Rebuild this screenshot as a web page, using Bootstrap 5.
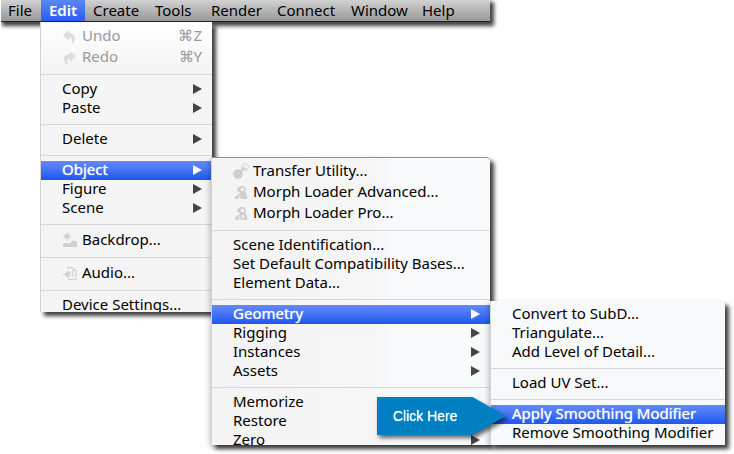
<!DOCTYPE html>
<html lang="en">
<head>
<meta charset="utf-8">
<meta name="viewport" content="width=device-width, initial-scale=1">
<title>Smoothing Modifier menu</title>
<link href="https://cdn.jsdelivr.net/npm/bootstrap@5.3.0/dist/css/bootstrap.min.css" rel="stylesheet">
<style>
body{background:#fff;color:#000;font-family:"Noto Sans","Open Sans",sans-serif;font-size:15px;line-height:19px}
.stage{min-height:454px}
.menubar{display:grid;grid-template-columns:41px 44px 62px 56px 66px 74px 71px 76px;width:fit-content;height:22px;
  background:linear-gradient(#d2d2d2,#b8b8b9 45%,#98989a);border-bottom:1px solid #222;box-shadow:3px 3px 4px 1px rgba(0,0,0,.75);clip-path:inset(0 -10px -10px 1px)}
.menubar button{border:0;background:none;padding:0 0 0 8px;text-align:left;line-height:21px;color:#000}
.menubar button.open{background:linear-gradient(#5c86f5,#2a5cf0);color:#fff;font-weight:600}
.menu{background:linear-gradient(#fff,#f5f5f5 44px);padding:4px 0 0;border-left:1px solid #d2d2d2;box-shadow:4px 4px 4px rgba(0,0,0,.75)}
.clip{overflow:hidden}
.menu-edit{left:40px;top:22px;width:172px;height:290px}
.menu-object{left:211px;top:157px;width:279px;height:288px;background:linear-gradient(90deg,#f4f4f4,#f6f6f7 58%,#f8f9fb 66%);border-top:1px solid #8a93a3;padding-top:3px;border-top-right-radius:4px;box-shadow:4px 4px 4px rgba(0,0,0,.75),-2px 2px 5px rgba(0,0,0,.2)}
.menu-geometry{left:490px;top:301px;width:235px;height:144px;background:#f8f9fb;border-top-right-radius:4px;box-shadow:4px 4px 4px rgba(0,0,0,.75),-2px 2px 5px rgba(0,0,0,.2)}
.entry{display:flex;align-items:center;width:100%;height:19px;border:0;background:none;padding:0 10px 2px 21px;color:#000;text-align:left;white-space:nowrap}
.entry.tall{height:21px}
.entry svg.glyph{width:20px;height:16px;flex:none;fill:#cfcfcf}
.entry:disabled{color:#999}
.entry:disabled svg.glyph{fill:#dedede}
.entry.lit{background:linear-gradient(#6489f7,#4373f4 50%,#1d56f2);color:#fff;text-shadow:0 0 1px rgba(255,255,255,.8)}
.entry.sub::after{content:"";margin-left:auto;border-left:9px solid #444;border-top:5px solid transparent;border-bottom:5px solid transparent}
.entry.lit.sub::after{border-left-color:#fff}
.rule{height:1px;margin:6px 0 5px;background:#d9d9d9}
.callout{left:377px;top:397px;filter:drop-shadow(2px 3px 2px rgba(0,0,0,.6))}
.callout span{display:block;width:129px;padding:0 0 0 16px;background:#0080c3;color:#fff;font:14px/38px "Liberation Sans",Arial,sans-serif;text-shadow:0 0 1px #fff;clip-path:polygon(0 0,74% 0,100% 50%,74% 100%,0 100%)}
</style>
<script src="https://cdn.jsdelivr.net/npm/bootstrap@5.3.0/dist/js/bootstrap.bundle.min.js"></script>
</head>
<body>
<main class="stage position-relative overflow-hidden">
<nav class="menubar" aria-label="Main menu">
<button type="button">File</button><button type="button" class="open">Edit</button><button type="button">Create</button><button type="button">Tools</button><button type="button">Render</button><button type="button">Connect</button><button type="button">Window</button><button type="button">Help</button>
</nav>

<div class="menu menu-edit position-absolute"><div class="clip h-100">
<button type="button" class="entry tall" disabled><svg class="glyph" viewBox="0 0 20 16"><path d="M1 7 7 2v3c5 0 7 3 5 9-1 1-2 1-3 1 2-3 1-5-2-5v3z"/></svg>Undo<span class="ms-auto">⌘Z</span></button>
<button type="button" class="entry tall" disabled><svg class="glyph" viewBox="0 0 20 16"><path d="M14 7 8 2v3C3 5 0 8 3 14c1 1 2 1 3 1-2-3-1-5 2-5v3z"/></svg>Redo<span class="ms-auto">⌘Y</span></button>
<div class="rule"></div>
<button type="button" class="entry sub">Copy</button>
<button type="button" class="entry sub">Paste</button>
<div class="rule"></div>
<button type="button" class="entry sub">Delete</button>
<div class="rule"></div>
<button type="button" class="entry sub lit">Object</button>
<button type="button" class="entry sub">Figure</button>
<button type="button" class="entry sub">Scene</button>
<div class="rule"></div>
<button type="button" class="entry tall"><svg class="glyph" viewBox="0 0 20 16"><circle cx="5" cy="4.500" r="2.500"/><path d="M5 0v9M.5 4.500h9M2 1.500l6 6M8 1.500l-6 6" stroke="#d4d4d4" stroke-width=".8"/><path d="M1 15v-3q3-2 6 0l4-4q2 2 4 1v6z"/></svg>Backdrop...</button>
<div class="rule"></div>
<button type="button" class="entry tall"><svg class="glyph" viewBox="0 0 20 16"><path d="M1 9h2l3-3v7l-3-3H1z"/><g fill="none" stroke="#cfcfcf"><path d="M6 4V2.500h5l3 3v9H6V14M11 2.500v3h3"/><path d="M8 7q1 2 0 4M10 6q2 3 0 6M6 6q2 3 0 7"/></g></svg>Audio...</button>
<div class="rule"></div>
<button type="button" class="entry">Device Settings...</button>
</div></div>

<div class="menu menu-object position-absolute"><div class="clip h-100">
<button type="button" class="entry tall"><svg class="glyph" viewBox="0 0 20 16"><circle cx="5" cy="11" r="4.800"/><path d="m7 9 4-4" stroke="#cfcfcf" stroke-width="2"/><circle cx="12" cy="4" r="3.500" fill="none" stroke="#d4d4d4"/><path d="m9.500 7 .5-4 3.500 3z"/></svg>Transfer Utility...</button>
<button type="button" class="entry tall"><svg class="glyph" viewBox="0 0 20 16"><path d="M4 6q1-4 5-4 4 0 4 4l-1 2q3 3 2 7H8l-1-2-2 2H2q0-3 2-4l2-1 1-2-3-1z"/><path d="M8 4h3v3H8zM5 12l3-1-2 2z" fill="#f5f5f5"/></svg>Morph Loader Advanced...</button>
<button type="button" class="entry tall"><svg class="glyph" viewBox="0 0 20 16"><path d="M4 6q1-4 5-4 4 0 4 4l-1 2q3 3 2 7H8l-1-2-2 2H2q0-3 2-4l2-1 1-2-3-1z"/><path d="M8 4h3v3H8zM5 12l3-1-2 2zM9 10h2v3H9z" fill="#f5f5f5"/></svg>Morph Loader Pro...</button>
<div class="rule"></div>
<button type="button" class="entry">Scene Identification...</button>
<button type="button" class="entry">Set Default Compatibility Bases...</button>
<button type="button" class="entry">Element Data...</button>
<div class="rule"></div>
<button type="button" class="entry sub lit">Geometry</button>
<button type="button" class="entry sub">Rigging</button>
<button type="button" class="entry sub">Instances</button>
<button type="button" class="entry sub">Assets</button>
<div class="rule"></div>
<button type="button" class="entry sub">Memorize</button>
<button type="button" class="entry sub">Restore</button>
<button type="button" class="entry sub">Zero</button>
</div></div>

<div class="menu menu-geometry position-absolute"><div class="clip h-100">
<button type="button" class="entry">Convert to SubD...</button>
<button type="button" class="entry">Triangulate...</button>
<button type="button" class="entry">Add Level of Detail...</button>
<div class="rule"></div>
<button type="button" class="entry">Load UV Set...</button>
<div class="rule"></div>
<button type="button" class="entry lit">Apply Smoothing Modifier</button>
<button type="button" class="entry">Remove Smoothing Modifier</button>
</div></div>

<div class="callout position-absolute"><span>Click Here</span></div>
</main>
</body>
</html>
